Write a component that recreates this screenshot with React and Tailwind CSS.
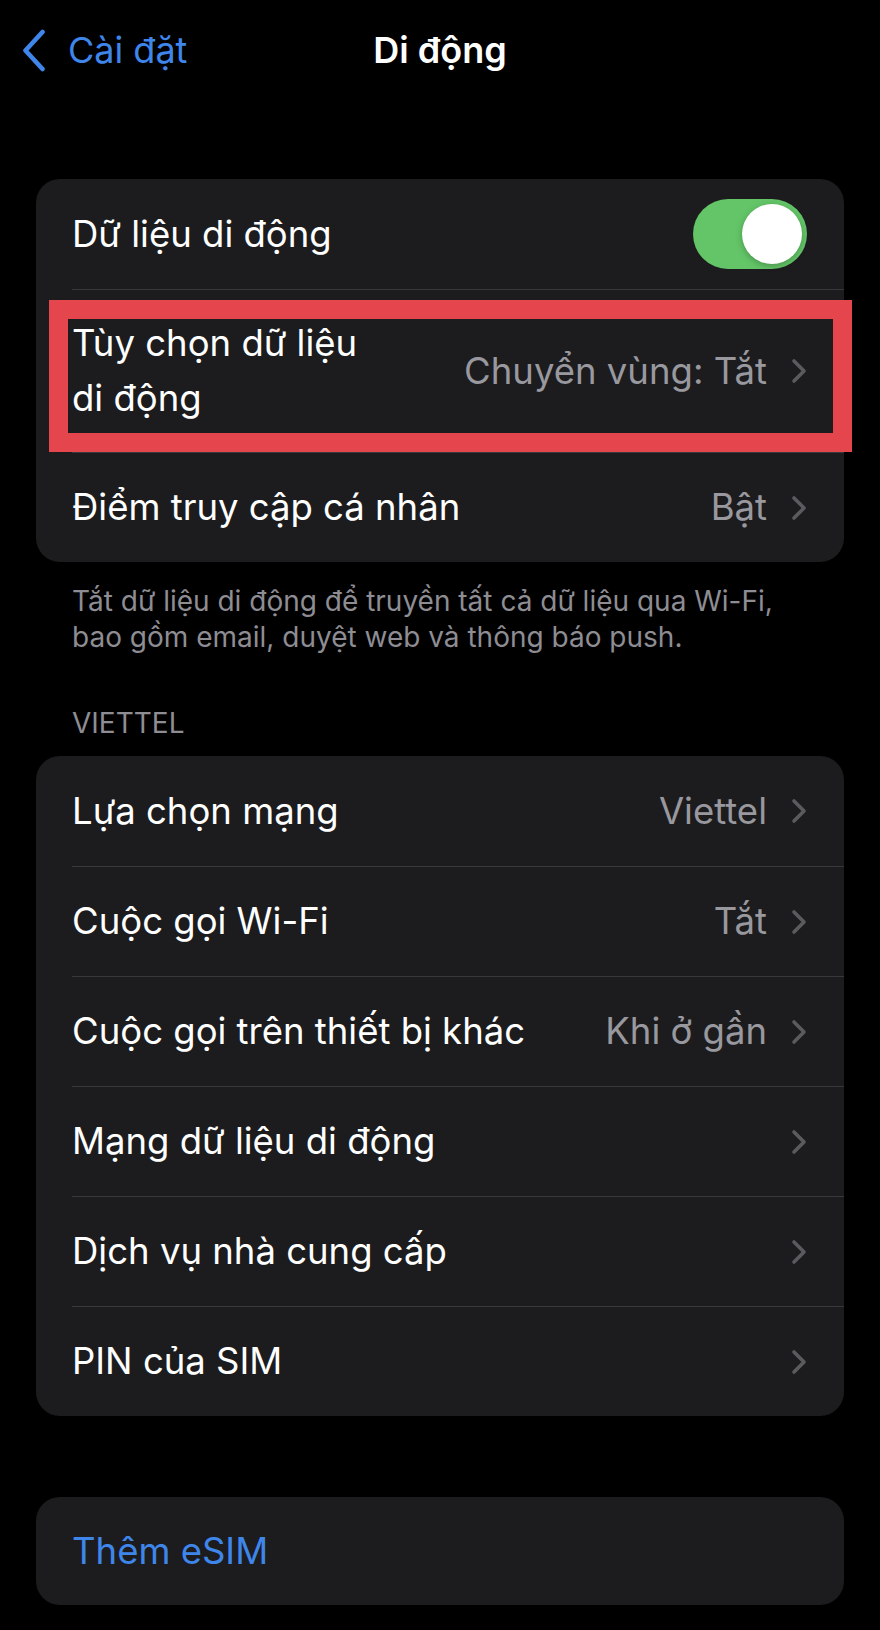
import React from 'react';

const font = "font-['Inter','Roboto','Liberation_Sans',sans-serif]";

const Chevron = () => (
  <svg width="16" height="26" viewBox="0 0 16 26" className="shrink-0">
    <path d="M3 3 L13 13 L3 23" fill="none" stroke="#5a5a5f" strokeWidth="3.6" strokeLinecap="round" strokeLinejoin="round" />
  </svg>
);

const Toggle = () => (
  <div className="relative w-[114px] h-[70px] rounded-full bg-[#63c567] shrink-0">
    <div className="absolute right-[5px] top-[5px] w-[60px] h-[60px] rounded-full bg-white shadow-[0_2px_6px_rgba(0,0,0,0.25)]" />
  </div>
);

// one settings cell; the hairline starts at the text column and runs to the card edge
function Row({ label, value, chevron = true, first = false, tall = false, right, labelClass = 'text-white' }) {
  return (
    <div className="pl-9">
      <div
        className={`flex items-center justify-between pr-[37px] ${tall ? 'h-[163px]' : 'h-[110px]'} ${
          first ? '' : 'border-t border-[#38383a]'
        }`}
      >
        <div className={`text-[36.5px] ${tall ? 'leading-[55px] w-[300px]' : 'leading-none'} ${labelClass}`}>{label}</div>
        <div className="flex items-center gap-[24px]">
          {value && <span className="text-[36.5px] leading-none text-[#98989e]">{value}</span>}
          {right}
          {chevron && !right && <Chevron />}
        </div>
      </div>
    </div>
  );
}

export default function App() {
  return (
    <div className={`min-h-[1630px] bg-black ${font} antialiased`}>
      {/* navigation bar */}
      <div className="grid grid-cols-[1fr_auto_1fr] items-center h-[100px]">
        <div className="flex items-center pl-[22px] gap-[22px] text-[#3f86ea]">
          <svg width="24" height="43" viewBox="0 0 24 43">
            <path d="M20.5 3 L3.5 21.5 L20.5 40" fill="none" stroke="#3f86ea" strokeWidth="4.6" strokeLinecap="round" strokeLinejoin="round" />
          </svg>
          <span className="text-[36px] leading-none">Cài đặt</span>
        </div>
        <div className="text-[36px] leading-none font-semibold text-white">Di động</div>
        <div />
      </div>

      {/* cellular data group */}
      <div className="relative mx-9 mt-[79px] rounded-[24px] bg-[#1c1c1e]">
        <Row label="Dữ liệu di động" first right={<Toggle />} />
        <Row label="Tùy chọn dữ liệu di động" value="Chuyển vùng: Tắt" tall />
        <Row label="Điểm truy cập cá nhân" value="Bật" />
        <div className="absolute left-[13px] top-[121px] w-[803px] h-[152px] border-[19px] border-[#e5454d] pointer-events-none" />
      </div>

      <p className="mx-9 pl-9 mt-[21px] text-[28px] leading-[36px] text-[#8d8d93]">
        Tắt dữ liệu di động để truyền tất cả dữ liệu qua Wi-Fi,
        <br />
        bao gồm email, duyệt web và thông báo push.
      </p>

      <div className="mx-9 pl-9 mt-[50px] text-[28px] leading-[36px] text-[#8d8d93]">VIETTEL</div>

      {/* carrier group */}
      <div className="mx-9 mt-[15px] rounded-[24px] bg-[#1c1c1e] overflow-hidden">
        <Row label="Lựa chọn mạng" value="Viettel" first />
        <Row label="Cuộc gọi Wi-Fi" value="Tắt" />
        <Row label="Cuộc gọi trên thiết bị khác" value="Khi ở gần" />
        <Row label="Mạng dữ liệu di động" />
        <Row label="Dịch vụ nhà cung cấp" />
        <Row label="PIN của SIM" />
      </div>

      <div className="mx-9 mt-[81px] h-[108px] rounded-[24px] bg-[#1c1c1e] flex items-center pl-9">
        <span className="text-[36.5px] leading-none text-[#3f86ea]">Thêm eSIM</span>
      </div>
    </div>
  );
}
